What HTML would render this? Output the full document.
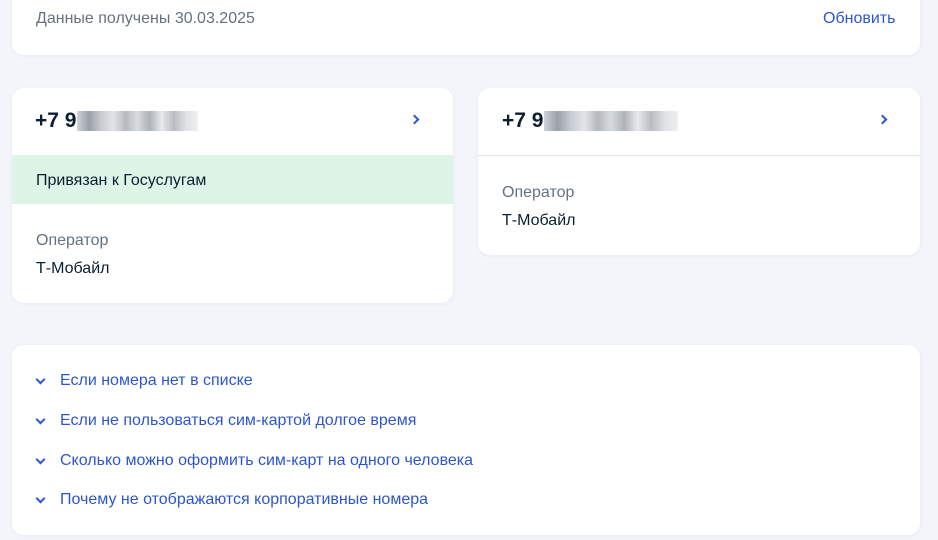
<!DOCTYPE html><html><head><meta charset="utf-8"><style>
body{margin:0;width:938px;height:540px;background:#f3f5fa;font-family:"Liberation Sans",sans-serif;position:relative;overflow:hidden}
.c{position:absolute;background:#fff;border-radius:12px;box-shadow:0 1px 4px rgba(40,60,120,.06)}
.t{position:absolute;white-space:nowrap}
.g{color:#66727f;font-size:16px}
.d{color:#0b1f33;font-size:16px}
.b{color:#2d55d0;font-size:16px}
.ph{font-size:21px;color:#0b1f33;font-weight:bold}
.blur{position:absolute;height:20px;background:linear-gradient(90deg,#cfd3d8 0,#9aa0a8 10%,#c8ccd2 20%,#e2e4e8 30%,#b5b9bf 40%,#d8dbdf 50%,#aeb3b9 60%,#e8eaec 70%,#b8bcc2 80%,#dfe1e4 90%,#eef0f2 100%)}
.ch{position:absolute;width:5px;height:5px;border-right:2px solid #2d55d0;border-bottom:2px solid #2d55d0}
</style></head><body>
<div class="c" style="left:12px;top:-12px;width:908px;height:67px"></div>
<div class="t g" style="left:36px;top:10px">Данные получены 30.03.2025</div>
<div class="t b" style="left:823px;top:10px">Обновить</div>

<div class="c" style="left:12px;top:88px;width:441px;height:215px;overflow:hidden">
<div style="position:absolute;left:0;top:67px;width:100%;height:49px;background:#ddf5e7"></div></div>
<div class="t ph" style="left:35px;top:109px">+7 9</div>
<div class="blur" style="left:77px;top:111px;width:121px"></div>
<div class="ch" style="left:411px;top:116px;transform:rotate(-45deg)"></div>
<div class="t d" style="left:36px;top:172px">Привязан к Госуслугам</div>
<div class="t g" style="left:36px;top:232px">Оператор</div>
<div class="t d" style="left:36px;top:260px">Т-Мобайл</div>

<div class="c" style="left:478px;top:88px;width:442px;height:167px">
<div style="position:absolute;left:0;top:67px;width:100%;height:1px;background:#e3e8ee"></div></div>
<div class="t ph" style="left:502px;top:109px">+7 9</div>
<div class="blur" style="left:544px;top:111px;width:134px"></div>
<div class="ch" style="left:879px;top:116px;transform:rotate(-45deg)"></div>
<div class="t g" style="left:502px;top:184px">Оператор</div>
<div class="t d" style="left:502px;top:212px">Т-Мобайл</div>

<div class="c" style="left:12px;top:345px;width:908px;height:190px"></div>
<div class="ch" style="left:37px;top:376px;transform:rotate(45deg)"></div>
<div class="t b" style="left:60px;top:372px">Если номера нет в списке</div>
<div class="ch" style="left:37px;top:416px;transform:rotate(45deg)"></div>
<div class="t b" style="left:60px;top:412px">Если не пользоваться сим-картой долгое время</div>
<div class="ch" style="left:37px;top:456px;transform:rotate(45deg)"></div>
<div class="t b" style="left:60px;top:452px">Сколько можно оформить сим-карт на одного человека</div>
<div class="ch" style="left:37px;top:495px;transform:rotate(45deg)"></div>
<div class="t b" style="left:60px;top:491px">Почему не отображаются корпоративные номера</div>
</body></html>
